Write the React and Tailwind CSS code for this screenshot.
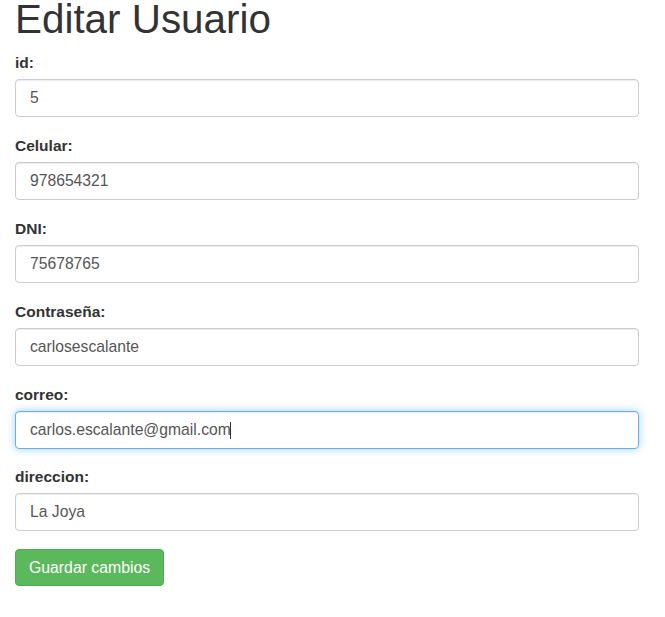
import React from "react";

const fields = [
  { label: "id:", value: "5" },
  { label: "Celular:", value: "978654321" },
  { label: "DNI:", value: "75678765" },
  { label: "Contraseña:", value: "carlosescalante" },
  { label: "correo:", value: "carlos.escalante@gmail.com", focus: true },
  { label: "direccion:", value: "La Joya" },
];

export default function App() {
  return (
    <div
      className="bg-white min-h-[617px] pl-[15px] pr-[26px] text-[#333] overflow-hidden"
      style={{ fontFamily: '"Liberation Sans", Arial, sans-serif' }}
    >
      <h1 className="mt-[-3px] mb-[11px] text-[40.4px] leading-[44px] font-normal text-[#333]">
        Editar Usuario
      </h1>
      <form onSubmit={(e) => e.preventDefault()}>
        {fields.map((f) => (
          <div key={f.label} className="mb-[17.9px]">
            <label className="block font-bold text-[15.5px] leading-[22px] mb-[5px]">
              {f.label}
            </label>
            <div className="relative">
              <input
                type="text"
                readOnly
                value={f.value}
                className={
                  f.focus
                    ? "block w-full h-[38px] px-[14px] text-[15.7px] text-[#555] bg-white border border-[#66afe9] rounded-[4px] outline-none shadow-[inset_0_1px_1px_rgba(0,0,0,0.075),0_0_8px_rgba(102,175,233,0.6)]"
                    : "block w-full h-[38px] px-[14px] text-[15.7px] text-[#555] bg-white border border-[#ccc] rounded-[4px] outline-none shadow-[inset_0_1px_1px_rgba(0,0,0,0.075)]"
                }
              />
              {f.focus && (
                <span className="absolute left-[215px] top-[11px] w-px h-[17px] bg-[#333]" />
              )}
            </div>
          </div>
        ))}
        <button
          type="submit"
          className="h-[37px] px-[13px] text-[15.8px] leading-[22px] text-white bg-[#5cb85c] border border-[#4cae4c] rounded-[4px]"
        >
          Guardar cambios
        </button>
      </form>
    </div>
  );
}
